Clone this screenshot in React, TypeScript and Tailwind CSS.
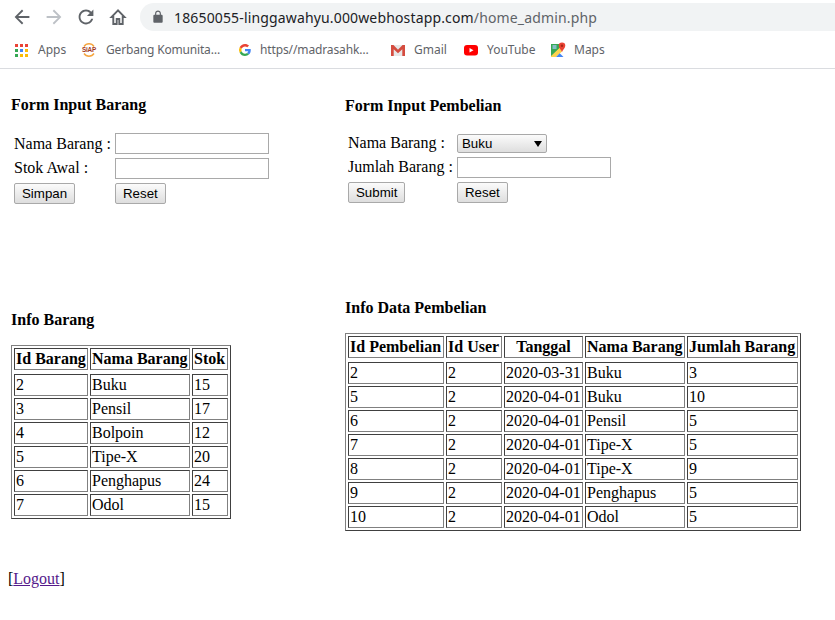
const barang = [
  ["2", "Buku", "15"],
  ["3", "Pensil", "17"],
  ["4", "Bolpoin", "12"],
  ["5", "Tipe-X", "20"],
  ["6", "Penghapus", "24"],
  ["7", "Odol", "15"],
];

const pembelian = [
  ["2", "2", "2020-03-31", "Buku", "3"],
  ["5", "2", "2020-04-01", "Buku", "10"],
  ["6", "2", "2020-04-01", "Pensil", "5"],
  ["7", "2", "2020-04-01", "Tipe-X", "5"],
  ["8", "2", "2020-04-01", "Tipe-X", "9"],
  ["9", "2", "2020-04-01", "Penghapus", "5"],
  ["10", "2", "2020-04-01", "Odol", "5"],
];

function NavIcon({ d, color }: { d: string; color: string }) {
  return (
    <svg width="24" height="24" viewBox="-1 -1 26 26" fill={color}>
      <path d={d} />
    </svg>
  );
}

function AppsIcon() {
  const colors = ["#ea4335", "#ea4335", "#ea4335", "#34a853", "#4285f4", "#fbbc05", "#34a853", "#fbbc05", "#fbbc05"];
  return (
    <div className="grid grid-cols-3 gap-[2px] w-[13px] h-[13px]">
      {colors.map((c, i) => (
        <span key={i} className="w-[3px] h-[3px]" style={{ backgroundColor: c }} />
      ))}
    </div>
  );
}

function SiapIcon() {
  return (
    <svg width="16" height="16" viewBox="0 0 16 16" fill="none">
      <path d="M3 4.500A6 6 0 0 1 13 4.500" stroke="#f5a53f" strokeWidth="1.400" />
      <path d="M3 11.500A6 6 0 0 0 13 11.500" stroke="#f5a53f" strokeWidth="1.400" />
      <text x="8" y="10.400" textAnchor="middle" fontSize="6.400" fontWeight="700" fontFamily="Liberation Sans, sans-serif" fill="#a33a1c">
        SiAP
      </text>
    </svg>
  );
}

function GoogleIcon() {
  return (
    <svg width="16" height="16" viewBox="-8 -8 64 64">
      <path fill="#ea4335" d="M24 9.500c3.500 0 6.700 1.200 9.200 3.600l6.900-6.900C35.900 2.400 30.500 0 24 0 14.600 0 6.500 5.400 2.600 13.200l8 6.200C12.500 13.600 17.800 9.500 24 9.500z" />
      <path fill="#4285f4" d="M47 24.500c0-1.600-.1-3.100-.4-4.500H24v9h12.900c-.6 3-2.200 5.500-4.700 7.200l7.700 6c4.500-4.200 7.100-10.300 7.100-17.700z" />
      <path fill="#fbbc05" d="M10.500 28.600A14.500 14.500 0 0 1 10.500 19.400l-8-6.200A24 24 0 0 0 2.600 34.800l7.900-6.200z" />
      <path fill="#34a853" d="M24 48c6.500 0 11.900-2.100 15.900-5.800l-7.700-6c-2.200 1.400-4.900 2.300-8.200 2.300-6.200 0-11.500-4.200-13.400-9.900l-8 6.200C6.500 42.600 14.600 48 24 48z" />
    </svg>
  );
}

function GmailIcon() {
  return (
    <svg width="16" height="16" viewBox="0 0 16 16">
      <path fill="#e8e8e8" d="M2 3h12v11H2z" />
      <path fill="#d0d0d0" d="M3.500 3 8 7.600 12.500 3H14L8 9.400 2 3z" />
      <path fill="#d54c3f" d="M1 3h2.400L8 7.700 12.600 3H15v11h-2.700V7.300L8 11.300 3.700 7.300V14H1z" />
    </svg>
  );
}

function YoutubeIcon() {
  return (
    <svg width="16" height="16" viewBox="0 0 16 16">
      <rect x="1" y="3" width="14" height="10.500" rx="3" fill="#f00" />
      <path d="M6.500 6v4.500L10.500 8.250z" fill="#fff" />
    </svg>
  );
}

function MapsIcon() {
  return (
    <svg width="16" height="16" viewBox="0 0 16 16">
      <path fill="#35a853" d="M1 2h10v3L5 11l-4 4z" />
      <path fill="#fbd34d" d="M1 14 10 5.500l2 4L6 15H1z" />
      <path fill="#4285f4" d="M6 15l3.700-3.700L13.500 15z" />
      <path fill="#a6c8f5" d="M2.500 3h4v4h-4z" opacity="0.7" />
      <path fill="#ea4335" d="M12 0.500a3.300 3.300 0 0 1 3.300 3.300C15.300 6 13 7.500 12 10c-1-2.500-3.300-4-3.300-6.200A3.300 3.300 0 0 1 12 .5z" />
      <circle cx="12" cy="3.800" r="1.200" fill="#a52714" />
    </svg>
  );
}

function Bookmark({ icon, label, className }: { icon: React.ReactNode; label: string; className: string }) {
  return (
    <div className={`flex items-center shrink-0 ${className}`}>
      {icon}
      <span className="text-[12px] text-[#5f6368] whitespace-nowrap">{label}</span>
    </div>
  );
}

function FormButton({ label }: { label: string }) {
  return (
    <button className="h-[21px] px-[7px] text-[13.3px] leading-none text-black font-['Liberation_Sans',sans-serif] border border-[#a9a9a9] rounded-[2px] bg-gradient-to-b from-[#fbfbfb] to-[#dedede]">
      {label}
    </button>
  );
}

function TextInput() {
  return <input className="block w-[154px] h-[21px] border border-[#a9a9a9] bg-white" />;
}

const cellBorder = "border border-t-[#404040] border-l-[#404040] border-r-[#808080] border-b-[#808080] p-px whitespace-nowrap";

function DataTable({ head, widths, rows, center }: { head: string[]; widths: string[]; rows: string[][]; center?: number }) {
  return (
    <table className="border border-t-[#808080] border-l-[#808080] border-r-[#404040] border-b-[#404040] border-separate border-spacing-[2px] text-[16px] leading-[18px] text-black">
      <thead>
        <tr>
          {head.map((h, i) => (
            <th key={h} className={`${cellBorder} ${widths[i]} font-bold ${i === center ? "text-center" : "text-left"}`}>
              {h}
            </th>
          ))}
        </tr>
        <tr />
      </thead>
      <tbody>
        {rows.map((row, r) => (
          <tr key={r}>
            {row.map((cell, i) => (
              <td key={i} className={cellBorder}>
                {cell}
              </td>
            ))}
          </tr>
        ))}
      </tbody>
    </table>
  );
}

export default function App() {
  return (
    <div className="w-[835px] h-[620px] overflow-hidden bg-white font-['Liberation_Serif',serif] text-black">
      <div className="h-[69px] border-b border-[#dadce0] font-['Noto_Sans',sans-serif]">
        <div className="flex items-center h-[34px] pl-[10px]">
          <NavIcon color="#5f6368" d="M20 11H7.830l5.590-5.590L12 4l-8 8 8 8 1.410-1.410L7.830 13H20v-2z" />
          <div className="ml-[8px]">
            <NavIcon color="#bdc1c6" d="M4 11h12.170l-5.590-5.590L12 4l8 8-8 8-1.410-1.410L16.170 13H4v-2z" />
          </div>
          <div className="ml-[8px]">
            <NavIcon color="#5f6368" d="M17.650 6.350C16.200 4.900 14.210 4 12 4c-4.420 0-7.990 3.580-7.990 8s3.570 8 7.990 8c3.730 0 6.840-2.550 7.730-6h-2.080c-.82 2.330-3.040 4-5.650 4-3.310 0-6-2.690-6-6s2.690-6 6-6c1.660 0 3.140.69 4.220 1.780L13 11h7V4l-2.350 2.350z" />
          </div>
          <div className="ml-[8px]">
            <svg width="24" height="24" viewBox="0 0 24 24" fill="none" stroke="#5f6368" strokeWidth="1.900">
              <path d="M12 5.300 5.500 12H7.300v7h3.400v-5h2.600v5h3.400v-7h1.800z" />
            </svg>
          </div>
          <div className="flex items-center ml-[10px] h-[28px] flex-1 bg-[#f1f3f4] rounded-l-[14px] pl-[11px]">
            <svg width="14" height="14" viewBox="0 0 24 24" fill="#5f6368">
              <path d="M18 8h-1V6c0-2.760-2.240-5-5-5S7 3.240 7 6v2H6c-1.100 0-2 .9-2 2v10c0 1.100.9 2 2 2h12c1.100 0 2-.9 2-2V10c0-1.100-.9-2-2-2zM9 6c0-1.660 1.340-3 3-3s3 1.340 3 3v2H9V6z" />
            </svg>
            <span className="ml-[9px] text-[14px] tracking-[0.15px] text-[#202124] whitespace-nowrap">
              18650055-linggawahyu.000webhostapp.com<span className="text-[#5f6368]">/home_admin.php</span>
            </span>
          </div>
        </div>
        <div className="flex items-center h-[30px] pl-[15px] pt-[2px]">
          <Bookmark icon={<div className="mr-[10px]"><AppsIcon /></div>} label="Apps" className="w-[66px]" />
          <Bookmark icon={<div className="mr-[9px]"><SiapIcon /></div>} label="Gerbang Komunita…" className="w-[156px] tracking-[-0.17px]" />
          <Bookmark icon={<div className="mr-[7px]"><GoogleIcon /></div>} label="https//madrasahk…" className="w-[153px] tracking-[-0.12px]" />
          <Bookmark icon={<div className="mr-[8px]"><GmailIcon /></div>} label="Gmail" className="w-[73px]" />
          <Bookmark icon={<div className="mr-[8px]"><YoutubeIcon /></div>} label="YouTube" className="w-[87px]" />
          <Bookmark icon={<div className="mr-[8px]"><MapsIcon /></div>} label="Maps" className="w-[60px]" />
        </div>
      </div>

      <div className="flex pl-[11px]">
        <div className="w-[334px] shrink-0">
          <h2 className="mt-[27px] text-[16px] leading-[18px] font-bold">Form Input Barang</h2>
          <div className="mt-[19px] pl-[3px] text-[16px] leading-[18px]">
            <div className="flex items-center h-[21px]">
              <span className="w-[101px]">Nama Barang :</span>
              <TextInput />
            </div>
            <div className="flex items-start h-[21px] mt-[4px]">
              <span className="w-[101px] mt-px">Stok Awal :</span>
              <TextInput />
            </div>
            <div className="flex items-center h-[21px] mt-[4px]">
              <div className="w-[101px]">
                <FormButton label="Simpan" />
              </div>
              <FormButton label="Reset" />
            </div>
          </div>
          <h2 className="mt-[107px] text-[16px] leading-[18px] font-bold">Info Barang</h2>
          <div className="mt-[16px]">
            <DataTable head={["Id Barang", "Nama Barang", "Stok"]} widths={["w-[74px]", "w-[100px]", "w-[36px]"]} rows={barang} />
          </div>
          <div className="mt-[51px] -ml-[3px] text-[16px] leading-[18px]">
            [<a href="#" className="text-[#551a8b] underline">Logout</a>]
          </div>
        </div>

        <div>
          <h2 className="mt-[28px] text-[16px] leading-[18px] font-bold">Form Input Pembelian</h2>
          <div className="mt-[19px] pl-[3px] text-[16px] leading-[18px]">
            <div className="flex items-start h-[21px]">
              <span className="w-[109px]">Nama Barang :</span>
              <div className="flex items-center justify-between w-[90px] h-[19px] pl-[4px] pr-[4px] text-[13.3px] font-['Liberation_Sans',sans-serif] border border-[#a9a9a9] rounded-[2px] bg-gradient-to-b from-[#fbfbfb] to-[#dedede]">
                <span>Buku</span>
                <svg width="8" height="6" viewBox="0 0 8 6" fill="#000">
                  <path d="M0 0h8L4 6z" />
                </svg>
              </div>
            </div>
            <div className="flex items-start h-[21px] mt-[2px]">
              <span className="w-[109px] mt-px">Jumlah Barang :</span>
              <TextInput />
            </div>
            <div className="flex items-center h-[21px] mt-[4px]">
              <div className="w-[109px]">
                <FormButton label="Submit" />
              </div>
              <FormButton label="Reset" />
            </div>
          </div>
          <h2 className="mt-[96px] text-[16px] leading-[18px] font-bold">Info Data Pembelian</h2>
          <div className="mt-[16px]">
            <DataTable
              head={["Id Pembelian", "Id User", "Tanggal", "Nama Barang", "Jumlah Barang"]}
              widths={["w-[96px]", "w-[56px]", "w-[79px]", "w-[100px]", "w-[111px]"]}
              rows={pembelian}
              center={2}
            />
          </div>
        </div>
      </div>
    </div>
  );
}
